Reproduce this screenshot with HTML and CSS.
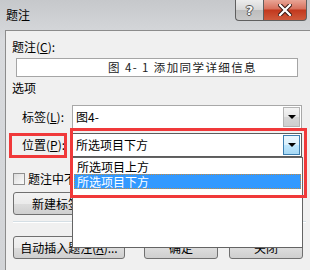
FILE: index.html
```html
<!DOCTYPE html>
<html lang="zh-CN">
<head>
  <meta charset="UTF-8">
  <meta name="viewport" content="width=device-width, initial-scale=1.0">
  <title>题注</title>
  <link rel="stylesheet" href="styles.css">
</head>
<body>

  <div class="window">

    <!-- Title bar -->
    <div class="titlebar">
      <span class="title">题注</span>
      <div class="caption-buttons">
        <span class="cap-btn help"><span class="help-glyph">?</span></span>
        <span class="cap-btn close">
          <svg width="14" height="12" viewBox="0 0 14 12">
            <path d="M2 1 L12 11 M12 1 L2 11" stroke="#3a1a14" stroke-width="4.2" stroke-linecap="square" fill="none"/>
            <path d="M2 1 L12 11 M12 1 L2 11" stroke="#ffffff" stroke-width="2.2" stroke-linecap="square" fill="none"/>
          </svg>
        </span>
      </div>
    </div>

    <!-- Dialog body -->
    <div class="client">
      <div class="field-label">题注(<u>C</u>):</div>
      <div class="caption-input">图 4- 1 添加同学详细信息</div>

      <div class="group-title"><span>选项</span></div>

      <div class="option-row">
        <span class="opt-label">标签(<u>L</u>):</span>
        <div class="combo">
          <span class="combo-text">图4-</span>
          <span class="combo-btn"><span class="arrow"></span></span>
        </div>
      </div>

      <div class="option-row">
        <span class="opt-label">位置(<u>P</u>):</span>
        <div class="combo active">
          <span class="combo-text">所选项目下方</span>
          <span class="combo-btn"><span class="arrow"></span></span>
        </div>
      </div>

      <!-- the open list covers the rest of these two rows -->
      <div class="check-row">
        <span class="checkbox"></span>
        <span class="clip check-text">题注中不包含标签(<u>E</u>)</span>
      </div>

      <div class="btn-row">
        <span class="btn btn-new"><span class="clip new-text">新建标签(<u>N</u>)...</span></span>
      </div>

      <div class="sep"></div>

      <div class="btn-row bottom-row">
        <span class="btn btn-auto">自动插入题注(<u>A</u>)...</span>
        <span class="btn btn-ok">确定</span>
        <span class="btn btn-close">关闭</span>
      </div>
    </div>

    <!-- Open drop-down list of the position combo -->
    <ul class="dropdown-list">
      <li>所选项目上方</li>
      <li class="selected">所选项目下方</li>
    </ul>

    <!-- Red highlight frames -->
    <div class="mark mark-label"></div>
    <div class="mark mark-combo"></div>

  </div>

</body>
</html>
```

FILE: styles.css
```css
/* Basic */
* {
  box-sizing: border-box;
}
body {
  margin: 0;
  background-color: #f0f0f0;
  font-family: "Noto Sans CJK SC", "Microsoft YaHei", sans-serif;
  font-size: 12px;
  color: #000;
}
u {
  text-decoration: underline;
}
.clip {
  display: block;
  overflow: hidden;
  white-space: nowrap;
}

/* Window frame */
.window {
  position: relative;
  width: 310px;
  height: 270px;
  overflow: hidden;
  background: linear-gradient(#c6c8cb, #d8dadd 40px, #d2d4d7);
}
.titlebar {
  height: 30px;
  display: flex;
  justify-content: space-between;
  align-items: flex-start;
}
.title {
  padding: 7px 0 0 6px;
  line-height: 16px;
}
.caption-buttons {
  display: flex;
  margin-right: 3px;
}
.cap-btn {
  height: 21px;
  display: flex;
  align-items: center;
  justify-content: center;
  border: 1px solid #5f5f5f;
  border-top: none;
}
.help {
  width: 28px;
  border-right: none;
  border-radius: 0 0 0 4px;
  background: linear-gradient(#ececec, #d6d6d6 50%, #bdbdbd 51%, #c9c9c9);
}
.help-glyph {
  font-family: "DejaVu Sans", sans-serif;
  font-weight: bold;
  font-size: 13px;
  color: #f4f4f4;
  text-shadow: -1px 0 #555, 1px 0 #555, 0 -1px #555, 0 1px #555;
}
.close {
  width: 44px;
  border-radius: 0 0 4px 0;
  background: linear-gradient(#e9a596, #d7705c 45%, #c2381d 50%, #cf5a3c);
}

/* Client area */
.client {
  margin-left: 5px;
  height: 240px;
  background-color: #f0f0f0;
  border-left: 1px solid #8c8c8c;
  border-top: 1px solid #8c8c8c;
  padding: 8px 0 0 7px;
}
.field-label {
  line-height: 16px;
  margin-left: -1px;
}
.caption-input {
  margin: 3px 0 0 3px;
  width: 282px;
  height: 19px;
  border: 1px solid #a5a5a5;
  background-color: #fff;
  padding-left: 91px;
  line-height: 17px;
  font-size: 11.5px;
  letter-spacing: 1.4px;
  color: #222;
}
.group-title {
  display: flex;
  align-items: center;
  margin: 3px 0 0 -1px;
  line-height: 16px;
}

/* Option rows */
.option-row {
  display: flex;
  align-items: center;
  margin-top: 9px;
}
.option-row + .option-row {
  margin-top: 4px;
}
.opt-label {
  width: 59px;
  padding-left: 9px;
  line-height: 16px;
}
.combo {
  display: flex;
  align-items: stretch;
  width: 230px;
  height: 24px;
  border: 1px solid #a8a8a8;
  background-color: #fff;
}
.combo-text {
  flex: 1;
  padding-left: 3px;
  line-height: 22px;
}
.combo-btn {
  width: 17px;
  margin: 1px;
  display: flex;
  align-items: center;
  justify-content: center;
  border: 1px solid #b4b4b4;
  background: linear-gradient(#f4f4f4, #e6e6e6 50%, #d6d6d6 51%, #cfcfcf);
}
.arrow {
  width: 0;
  height: 0;
  border-left: 4px solid transparent;
  border-right: 4px solid transparent;
  border-top: 4px solid #000;
}
.combo.active {
  border-color: #5c5c5c;
}
.combo.active .combo-btn {
  border-color: #3c7fb1;
  background: linear-gradient(#eaf6fd, #d9f0fc 50%, #bee6fd 51%, #a7d9f5);
}

/* Checkbox */
.check-row {
  display: flex;
  align-items: center;
  margin-top: 14px;
  line-height: 16px;
}
.checkbox {
  width: 12px;
  height: 12px;
  margin-right: 3px;
  border: 1px solid #8f8f8f;
  background: linear-gradient(135deg, #dcdcdc, #fbfbfb);
}
.check-text {
  width: 44px;
}

/* Buttons */
.btn-row {
  display: flex;
  margin-top: 5px;
}
.btn {
  display: flex;
  align-items: center;
  justify-content: center;
  height: 23px;
  border: 1px solid #707070;
  border-radius: 3px;
  background: linear-gradient(#f2f2f2, #ebebeb 50%, #dddddd 51%, #cfcfcf);
  white-space: nowrap;
}
.btn-new {
  width: 116px;
  justify-content: flex-start;
  padding-left: 18px;
}
.new-text {
  width: 40px;
}
.sep {
  margin: 6px 4px 0 0;
  border-top: 1px solid #d5dfe5;
  border-bottom: 1px solid #fff;
}
.bottom-row {
  margin-top: 13px;
}
.btn-auto {
  width: 112px;
}
.btn-ok {
  width: 74px;
  margin-left: 19px;
}
.btn-close {
  width: 74px;
  margin-left: 11px;
}

/* Drop-down list */
.dropdown-list {
  position: absolute;
  left: 72px;
  top: 157px;
  width: 231px;
  height: 91px;
  margin: 0;
  padding: 1px;
  list-style: none;
  background-color: #fff;
  border: 1px solid #646464;
}
.dropdown-list li {
  height: 15px;
  line-height: 15px;
  padding-left: 3px;
}
.dropdown-list li.selected {
  background-color: #3399ff;
  color: #fff;
  outline: 1px dotted #c88a3c;
  outline-offset: -1px;
}

/* Red annotation frames */
.mark {
  position: absolute;
  border: 3px solid #f0393a;
}
.mark-label {
  left: 9px;
  top: 133px;
  width: 58px;
  height: 25px;
}
.mark-combo {
  left: 70px;
  top: 128px;
  width: 237px;
  height: 70px;
}
```
